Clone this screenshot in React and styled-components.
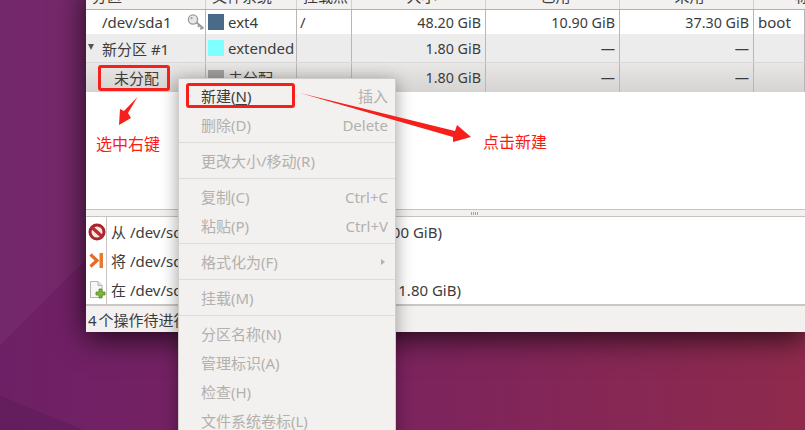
import React from "react";
import styled, { createGlobalStyle } from "styled-components";

const GlobalStyle = createGlobalStyle`
  html, body {
    margin: 0;
    padding: 0;
    background: #7a2358;
  }
  * {
    box-sizing: border-box;
  }
`;

const FONT = `"Noto Sans", "Noto Sans CJK SC", sans-serif`;
const COLUMNS = "120px 91px 55px 134px 134px 134px 1fr";

const Desktop = styled.div`
  position: relative;
  width: 805px;
  height: 430px;
  overflow: hidden;
  padding-left: 86px;
  font-family: ${FONT};
  font-size: 15px;
  color: #3c3c3c;
  background:
    linear-gradient(135deg, rgba(255, 255, 255, 0.035) 244px, transparent 244px),
    linear-gradient(22.4deg, rgba(50, 20, 60, 0.18) 32px, transparent 32px),
    linear-gradient(90deg, #6e2066 0%, #7a2360 45%, #8f2a4c 100%);
`;

const AppWindow = styled.div`
  display: flex;
  flex-direction: column;
  height: 350px;
  margin-top: -18px;
  background: #fff;
  box-shadow: 0 6px 28px rgba(0, 0, 0, 0.75);
`;

const TableHeader = styled.div`
  display: grid;
  grid-template-columns: ${COLUMNS};
  grid-template-rows: 27px;
  flex: none;
  height: 28px;
  overflow: hidden;
  background: #f2f1ef;
  border-bottom: 1px solid #b3b0ad;
`;

const HeaderCell = styled.div`
  display: flex;
  align-items: flex-start;
  justify-content: ${(p) => (p.$center ? "center" : "flex-start")};
  padding-top: 4px;
  padding-left: ${(p) => p.$pad || 6}px;
  line-height: 20px;
  border-right: 1px solid #d3d0cd;
`;

const Row = styled.div`
  display: grid;
  grid-template-columns: ${COLUMNS};
  flex: none;
  height: ${(p) => p.$height}px;
  background: ${(p) =>
    p.$selected
      ? "linear-gradient(#e8e7e5, #d6d4d2)"
      : p.$shaded
        ? "#ececec"
        : "#fff"};
  border-bottom: ${(p) => (p.$shaded ? "1px solid #d8d8d8" : "0")};
`;

const Cell = styled.div`
  display: flex;
  align-items: center;
  gap: 4px;
  min-width: 0;
  padding-left: ${(p) => p.$pad ?? 3}px;
  border-right: 1px solid #b9b7b5;
  white-space: nowrap;
`;

const SizeCell = styled(Cell)`
  justify-content: flex-end;
  padding: 0 4px 0 0;
  font-size: 14.3px;
`;

const NameCell = styled(Cell)`
  position: relative;
`;

const Expander = styled.span`
  position: absolute;
  left: 2px;
  top: 10px;
  border-left: 3.5px solid transparent;
  border-right: 3.5px solid transparent;
  border-top: 6px solid #555;
`;

const KeyIcon = styled.svg`
  position: absolute;
  right: 0;
  top: 4px;
`;

const Swatch = styled.span`
  flex: none;
  width: 16px;
  height: 16px;
  background: ${(p) => p.$color};
`;

const TableBody = styled.div`
  flex: 1;
  background: #fff;
`;

const PaneHandle = styled.div`
  display: flex;
  align-items: center;
  gap: 1px;
  flex: none;
  height: 8px;
  padding-left: 385px;
  background: #f2f1ef;
  border-top: 1px solid #c6c3c0;
  border-bottom: 1px solid #c6c3c0;
`;

const HandleDot = styled.span`
  width: 1px;
  height: 3px;
  background: #a5a3a1;
`;

const LogPane = styled.div`
  display: flex;
  flex-direction: column;
  flex: none;
  height: 87px;
  background: #fff;
`;

const LogRow = styled.div`
  display: flex;
  flex: none;
  height: 29px;
`;

const LogIcon = styled.div`
  display: flex;
  align-items: center;
  justify-content: center;
  flex: none;
  width: 21px;
  padding-left: 1px;
  margin-right: 4px;
  border-right: 1px solid #c6c3c0;
`;

const LogText = styled.div`
  display: flex;
  align-items: center;
  white-space: nowrap;
`;

const StatusBar = styled.div`
  display: flex;
  align-items: center;
  flex: none;
  height: 28px;
  padding-left: 2px;
  word-spacing: -2px;
  background: #f2f1ef;
  border-top: 2px solid #c9c6c3;
`;

const ContextMenu = styled.div`
  position: absolute;
  left: 178px;
  top: 78px;
  width: 218px;
  height: 380px;
  padding-top: 2px;
  background: #f2f1ef;
  border: 1px solid #cfccc9;
  box-shadow: 0 3px 16px rgba(0, 0, 0, 0.38);
`;

const MenuItem = styled.div`
  display: flex;
  align-items: center;
  justify-content: space-between;
  height: 29px;
  padding: 0 7px 0 22px;
  color: ${(p) => (p.$enabled ? "#3c3c3c" : "#b3b0ad")};
`;

const Accel = styled.span`
  color: #b3b0ad;
`;

const Mnemonic = styled.span`
  text-decoration: underline;
  text-underline-offset: 2px;
`;

const SubmenuArrow = styled.span`
  margin-right: 3px;
  border-top: 3.5px solid transparent;
  border-bottom: 3.5px solid transparent;
  border-left: 4px solid #b3b0ad;
`;

const MenuSeparator = styled.div`
  height: 1px;
  margin: 3px 0;
  background: #dedbd8;
`;

const Callout = styled.div`
  position: absolute;
  left: ${(p) => p.$x}px;
  top: ${(p) => p.$y}px;
  width: ${(p) => p.$w}px;
  height: ${(p) => p.$h}px;
  border: 3px solid #f5201c;
  border-radius: 3px;
`;

const Note = styled.div`
  position: absolute;
  left: ${(p) => p.$x}px;
  top: ${(p) => p.$y}px;
  font-size: 16px;
  line-height: 20px;
  color: #fb1a12;
  white-space: nowrap;
`;

const ArrowLayer = styled.svg`
  position: absolute;
  left: 0;
  top: 0;
`;

const rows = [
  { name: "/dev/sda1", indent: 16, color: "#4a6a8a", fs: "ext4", mount: "/", size: "48.20 GiB", used: "10.90 GiB", free: "37.30 GiB", flags: "boot", height: 24, locked: true },
  { name: "新分区 #1", indent: 16, color: "#7fffff", fs: "extended", mount: "", size: "1.80 GiB", used: "—", free: "—", flags: "", height: 29, shaded: true, expander: true },
  { name: "未分配", indent: 28, color: "#a0a0a0", fs: "未分配", mount: "", size: "1.80 GiB", used: "—", free: "—", flags: "", height: 29, selected: true },
];

const headers = ["分区", "文件系统", "挂载点", "大小", "已用", "未用", "标识"];

const StopIcon = () => (
  <svg width="18" height="18" viewBox="0 0 18 18">
    <circle cx="9" cy="9" r="7" fill="#f6e4e4" stroke="#a9242c" strokeWidth="3" />
    <path d="M4 4.5 L14 13.5" stroke="#bc2a30" strokeWidth="3.4" />
  </svg>
);

const MoveIcon = () => (
  <svg width="15" height="17" viewBox="0 0 15 17">
    <path d="M1.5 2.5 L8 8.5 L1.5 14.5" fill="none" stroke="#e46c28" strokeWidth="3.2" />
    <rect x="10.5" y="1" width="3.5" height="15" fill="#e8792e" />
  </svg>
);

const NewIcon = () => (
  <svg width="18" height="20" viewBox="0 0 18 20">
    <path d="M2.5 1.5 H10 L14 5.5 V17.5 H2.5 Z" fill="#f7f7f5" stroke="#b5b5b0" />
    <path d="M10 1.5 V5.5 H14" fill="#e2e2de" stroke="#b5b5b0" />
    <path d="M11 9 H14 V12 H17 V15 H14 V18 H11 V15 H8 V12 H11 Z" fill="#7fb53a" stroke="#4e8a1c" strokeWidth="0.8" />
  </svg>
);

const Key = () => (
  <KeyIcon width="18" height="17" viewBox="0 0 18 17">
    <circle cx="6" cy="5.5" r="4.6" fill="#e8e8e6" stroke="#9a9a98" strokeWidth="1.3" />
    <circle cx="4.6" cy="4.2" r="1.1" fill="#a5a5a3" />
    <path d="M9.5 8.5 L16.5 14.5 M12.5 11 L11 13 M15 13.2 L13.5 15.5" fill="none" stroke="#9a9a98" strokeWidth="1.9" />
  </KeyIcon>
);

const App = () => (
  <Desktop>
    <GlobalStyle />
    <AppWindow>
      <TableHeader>
        {headers.map((h, i) => (
          <HeaderCell key={h} $center={i > 2 && i < 6} $pad={i === 6 ? 41 : undefined}>
            {h}
          </HeaderCell>
        ))}
      </TableHeader>
      {rows.map((r) => (
        <Row key={r.name} $height={r.height} $shaded={r.shaded} $selected={r.selected}>
          <NameCell $pad={r.indent}>
            {r.expander && <Expander />}
            {r.name}
            {r.locked && <Key />}
          </NameCell>
          <Cell $pad={2}>
            <Swatch $color={r.color} />
            {r.fs}
          </Cell>
          <Cell>{r.mount}</Cell>
          <SizeCell>{r.size}</SizeCell>
          <SizeCell>{r.used}</SizeCell>
          <SizeCell>{r.free}</SizeCell>
          <Cell $pad={4}>{r.flags}</Cell>
        </Row>
      ))}
      <TableBody />
      <PaneHandle>
        <HandleDot />
        <HandleDot />
        <HandleDot />
        <HandleDot />
      </PaneHandle>
      <LogPane>
        <LogRow>
          <LogIcon><StopIcon /></LogIcon>
          <LogText>从 /dev/sda2 删除 逻辑分区 (unknown, 2.00 GiB)</LogText>
        </LogRow>
        <LogRow>
          <LogIcon><MoveIcon /></LogIcon>
          <LogText>将 /dev/sda1 向左移动</LogText>
        </LogRow>
        <LogRow>
          <LogIcon><NewIcon /></LogIcon>
          <LogText>在 /dev/sda 上创建 逻辑分区 #1(扩展分区, 1.80 GiB)</LogText>
        </LogRow>
      </LogPane>
      <StatusBar>4 个操作待进行</StatusBar>
    </AppWindow>

    <ContextMenu>
      <MenuItem $enabled>
        <span>新建(<Mnemonic>N</Mnemonic>)</span>
        <Accel>插入</Accel>
      </MenuItem>
      <MenuItem><span>删除(D)</span><span>Delete</span></MenuItem>
      <MenuSeparator />
      <MenuItem><span>更改大小/移动(R)</span></MenuItem>
      <MenuSeparator />
      <MenuItem><span>复制(C)</span><span>Ctrl+C</span></MenuItem>
      <MenuItem><span>粘贴(P)</span><span>Ctrl+V</span></MenuItem>
      <MenuSeparator />
      <MenuItem><span>格式化为(F)</span><SubmenuArrow /></MenuItem>
      <MenuSeparator />
      <MenuItem><span>挂载(M)</span></MenuItem>
      <MenuSeparator />
      <MenuItem><span>分区名称(N)</span></MenuItem>
      <MenuItem><span>管理标识(A)</span></MenuItem>
      <MenuItem><span>检查(H)</span></MenuItem>
      <MenuItem><span>文件系统卷标(L)</span></MenuItem>
    </ContextMenu>

    <Callout $x={98} $y={65} $w={72} $h={26} />
    <Callout $x={186} $y={83} $w={109} $h={25} />
    <ArrowLayer width="805" height="430" viewBox="0 0 805 430">
      <polygon fill="#f5201c" points="137.5,97 128,113 131,118 119,125 120,109 124,111" />
      <polygon fill="#f5201c" points="300,93 455,131 457,125 471,137 453,142 453,137" />
    </ArrowLayer>
    <Note $x={96} $y={134}>选中右键</Note>
    <Note $x={483} $y={132}>点击新建</Note>
  </Desktop>
);

export default App;
